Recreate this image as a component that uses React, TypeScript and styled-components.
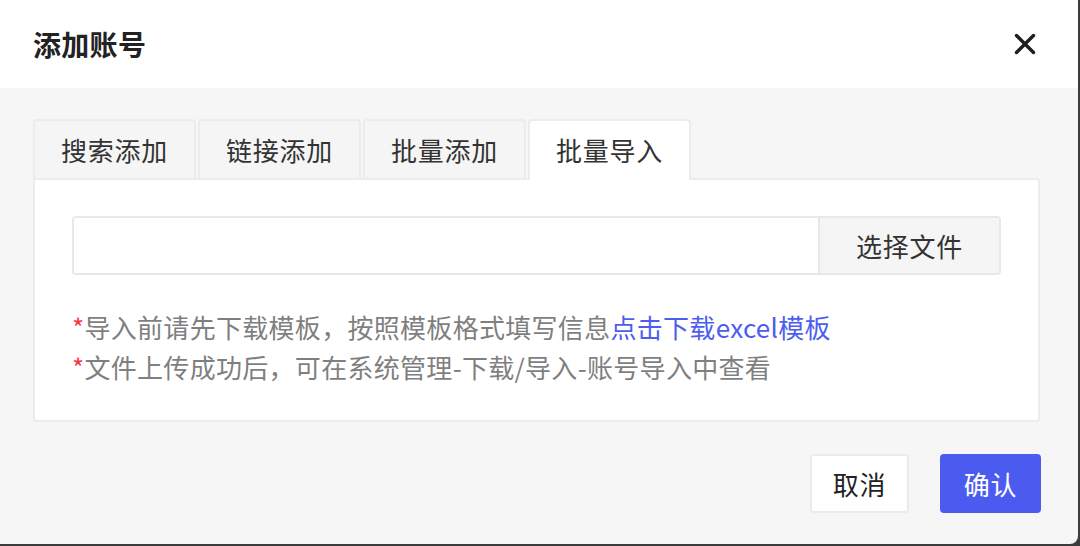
import React, { useState } from "react";
import styled, { createGlobalStyle } from "styled-components";

const Global = createGlobalStyle`
  html, body { margin: 0; padding: 0; }
  body {
    background: #3b3b3b;
    font-family: "Noto Sans CJK SC", "Noto Sans", sans-serif;
    width: 1080px;
    height: 546px;
    overflow: hidden;
  }
`;

const Dialog = styled.div`
  width: 1078px;
  height: 544px;
  background: #f6f6f6;
  border-bottom-right-radius: 8px;
  overflow: hidden;
  display: flex;
  flex-direction: column;
`;

const Header = styled.div`
  height: 88px;
  flex: none;
  background: #ffffff;
  display: flex;
  align-items: center;
  justify-content: space-between;
  padding: 0 42px 0 33px;
`;

const Title = styled.h1`
  margin: 0;
  font-size: 28px;
  font-weight: 700;
  color: #222222;
  letter-spacing: 0.3px;
`;

const CloseButton = styled.button`
  border: none;
  background: transparent;
  padding: 0;
  width: 22px;
  height: 22px;
  display: flex;
  align-items: center;
  justify-content: center;
  cursor: pointer;
`;

const Body = styled.div`
  flex: 1;
  padding: 31px 38px 0 33px;
  display: flex;
  flex-direction: column;
`;

const Tabs = styled.div`
  display: flex;
  gap: 2px;
  position: relative;
  z-index: 1;
`;

const Tab = styled.div<{ $active?: boolean }>`
  width: 163px;
  box-sizing: border-box;
  border: 2px solid #ececec;
  border-bottom: none;
  border-radius: 4px 4px 0 0;
  background: ${(p) => (p.$active ? "#ffffff" : "#f5f5f5")};
  margin-bottom: ${(p) => (p.$active ? "-2px" : "0")};
  height: ${(p) => (p.$active ? "61px" : "59px")};
  padding-bottom: ${(p) => (p.$active ? "2px" : "0")};
  display: flex;
  align-items: center;
  justify-content: center;
  font-size: 26px;
  letter-spacing: 0.8px;
  color: #333333;
  cursor: pointer;
`;

const Panel = styled.div`
  height: 244px;
  box-sizing: border-box;
  background: #ffffff;
  border: 2px solid #ececec;
  border-radius: 0 4px 4px 4px;
  padding: 36px 37px 0 37px;
`;

const FileRow = styled.div`
  display: flex;
  height: 59px;
  box-sizing: border-box;
  border: 2px solid #e8e8e8;
  border-radius: 4px;
  overflow: hidden;
`;

const FileInput = styled.input`
  flex: 1;
  border: none;
  outline: none;
  background: #ffffff;
  font-family: inherit;
  font-size: 24px;
`;

const PickButton = styled.button`
  width: 181px;
  border: none;
  border-left: 2px solid #e8e8e8;
  background: #f5f5f5;
  font-family: inherit;
  font-size: 26px;
  letter-spacing: 0.8px;
  color: #333333;
  cursor: pointer;
`;

const Hints = styled.div`
  margin-top: 32px;
  font-size: 26px;
  letter-spacing: 0.3px;
  line-height: 40px;
  color: #7f7f7f;
`;

const Star = styled.span`
  color: #f0383f;
`;

const Link = styled.a`
  color: #4d5df0;
  text-decoration: none;
  cursor: pointer;
`;

const Footer = styled.div`
  display: flex;
  justify-content: flex-end;
  align-items: center;
  gap: 31px;
  padding: 32px 0 0 0;
  margin-right: -1px;
`;

const Button = styled.button<{ $primary?: boolean }>`
  height: 59px;
  width: ${(p) => (p.$primary ? "101px" : "99px")};
  box-sizing: border-box;
  border-radius: 4px;
  border: ${(p) => (p.$primary ? "none" : "2px solid #ebebeb")};
  background: ${(p) => (p.$primary ? "#4b5bef" : "#ffffff")};
  color: ${(p) => (p.$primary ? "#ffffff" : "#222222")};
  font-family: inherit;
  font-size: 26px;
  letter-spacing: 0.8px;
  cursor: pointer;
`;

const tabs = ["搜索添加", "链接添加", "批量添加", "批量导入"];

export default function App() {
  const [active, setActive] = useState(3);
  return (
    <>
      <Global />
      <Dialog>
        <Header>
          <Title>添加账号</Title>
          <CloseButton aria-label="关闭">
            <svg width="22" height="22" viewBox="0 0 22 22">
              <path
                d="M2.5 2.5 L19.5 19.5 M19.5 2.5 L2.5 19.5"
                stroke="#1f1f1f"
                strokeWidth="3.4"
                strokeLinecap="round"
              />
            </svg>
          </CloseButton>
        </Header>
        <Body>
          <Tabs>
            {tabs.map((t, i) => (
              <Tab key={t} $active={i === active} onClick={() => setActive(i)}>
                {t}
              </Tab>
            ))}
          </Tabs>
          <Panel>
            <FileRow>
              <FileInput readOnly />
              <PickButton>选择文件</PickButton>
            </FileRow>
            <Hints>
              <div>
                <Star>*</Star>导入前请先下载模板，按照模板格式填写信息
                <Link>点击下载excel模板</Link>
              </div>
              <div>
                <Star>*</Star>文件上传成功后，可在系统管理-下载/导入-账号导入中查看
              </div>
            </Hints>
          </Panel>
          <Footer>
            <Button>取消</Button>
            <Button $primary>确认</Button>
          </Footer>
        </Body>
      </Dialog>
    </>
  );
}
